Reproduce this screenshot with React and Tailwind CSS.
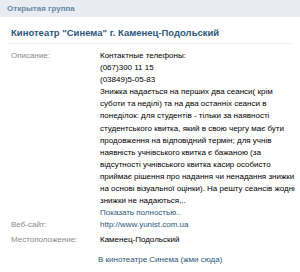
const DESCRIPTION = [
  'Контактные телефоны:',
  '(067)300 11 15',
  '(03849)5-05-83',
  'Знижка надається на перших два сеанси( крім',
  'суботи та неділі) та на два останніх сеанси в',
  'понеділок: для студентів - тільки за наявності',
  'студентського квитка, який в свою чергу має бути',
  'продовження на відповідний термін; для учнів',
  'наявність учнівського квитка є бажаною (за',
  'відсутності учнівського квитка касир особисто',
  'приймає рішення про надання чи ненадання знижки',
  'на основі візуальної оцінки). На решту сеансів жодні',
  'знижки не надаються,..',
];

function Row({ label, children }) {
  return (
    <div className="flex">
      <div className="w-[89px] shrink-0 text-[#8a8a8a]">{label}</div>
      <div className="min-w-0 flex-1">{children}</div>
    </div>
  );
}

export default function App() {
  return (
    <div
      className="w-[300px] h-[272px] overflow-hidden bg-white text-[8px] leading-[12.1px] text-black"
      style={{ fontFamily: '"Liberation Sans", Arial, sans-serif' }}
    >
      {/* group type bar */}
      <div className="h-[17px] bg-[#e9edf2] pl-[7px] pt-[3px] font-bold text-[#6a87a5]">
        Открытая группа
      </div>

      {/* title */}
      <div className="mx-[8px] border-b border-[#eef0f3] pl-[3px] pt-[10px] pb-[4px] font-bold text-[9.5px] leading-[12px] text-[#2b587a]">
        Кинотеатр "Синема" г. Каменец-Подольский
      </div>

      <div className="pl-[11px] pt-[6px]">
        <Row label="Описание:">
          {DESCRIPTION.map((line) => (
            <div key={line} className="whitespace-nowrap">{line}</div>
          ))}
          <div className="text-[#2b587a]">Показать полностью..</div>
        </Row>
        <Row label="Веб-сайт:">
          <span className="text-[#2b587a]">http://www.yunist.com.ua</span>
        </Row>
        <div className="mt-[3px]">
          <Row label="Местоположение:">Каменец-Подольский</Row>
        </div>
      </div>

      <div className="pl-[98px] pt-[7px] text-[#2b587a]">В кинотеатре Синема (жми сюда)</div>
    </div>
  );
}
